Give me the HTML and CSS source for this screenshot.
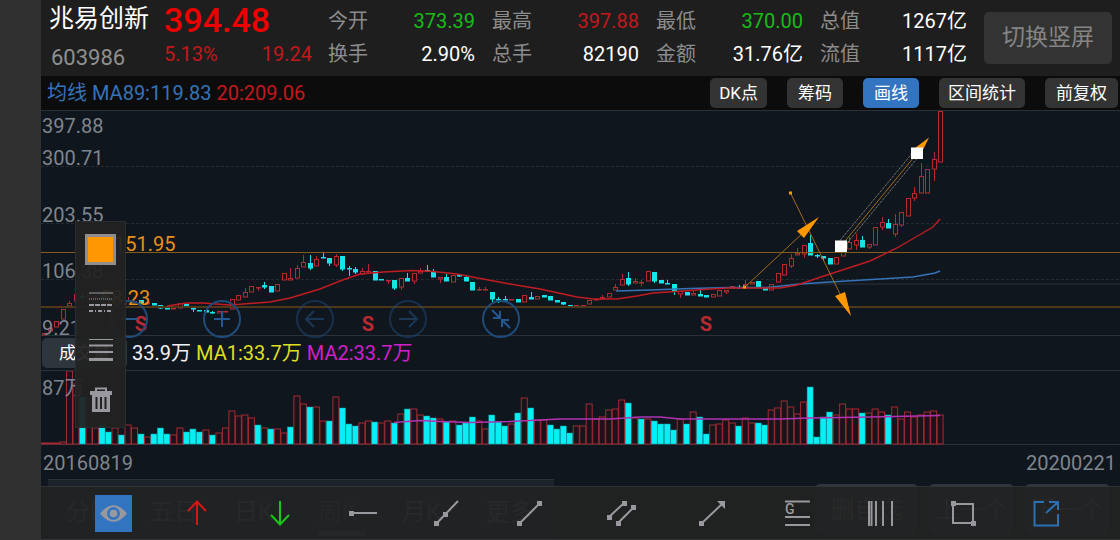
FILE: index.html
```html
<!DOCTYPE html>
<html lang="zh-CN">
<head>
<meta charset="utf-8">
<meta name="viewport" content="width=device-width, initial-scale=1">
<title>兆易创新 603986</title>
<link rel="stylesheet" href="styles.css">
</head>
<body>
<main class="app">
  <header class="quote">
    <div class="stock">
      <h1 class="name">兆易创新</h1>
      <span class="code">603986</span>
    </div>
    <div class="price">
      <strong class="last">394.48</strong>
      <div class="change"><span>5.13%</span><span>19.24</span></div>
    </div>
    <dl class="stats">
      <div><dt>今开</dt><dd class="down">373.39</dd></div>
      <div><dt>最高</dt><dd class="up">397.88</dd></div>
      <div><dt>最低</dt><dd class="down">370.00</dd></div>
      <div><dt>总值</dt><dd>1267亿</dd></div>
      <div><dt>换手</dt><dd>2.90%</dd></div>
      <div><dt>总手</dt><dd>82190</dd></div>
      <div><dt>金额</dt><dd>31.76亿</dd></div>
      <div><dt>流值</dt><dd>1117亿</dd></div>
    </dl>
    <button class="rotate" type="button">切换竖屏</button>
  </header>

  <div class="averages">
    <p class="legend"><span class="blue">均线 MA89:119.83</span> <span class="red">20:209.06</span></p>
    <div class="modes">
      <button type="button">DK点</button>
      <button type="button">筹码</button>
      <button type="button" class="active">画线</button>
      <button type="button">区间统计</button>
      <button type="button" class="last-mode">前复权</button>
    </div>
  </div>

  <section class="charts">
    <div class="pane price-pane">
      <svg id="price" class="plot" viewBox="41 110 1079 226" preserveAspectRatio="none" aria-label="周K线"></svg>
      <ol class="axis">
        <li class="t1">397.88</li><li class="t2">300.71</li><li class="t3">203.55</li><li class="t4">106.38</li><li class="t5">9.21</li>
      </ol>
      <span class="level high">151.95</span>
      <span class="level low">58.23</span>
      <div class="zoomers">
        <button type="button" aria-label="缩小"><svg viewBox="0 0 38 38"><path d="M11 19H27"/></svg></button>
        <button type="button" aria-label="放大"><svg viewBox="0 0 38 38"><path d="M11 19H27M19 11V27"/></svg></button>
        <button type="button" aria-label="左移" class="dim"><svg viewBox="0 0 38 38"><path d="M28 19H11M18 11L10 19L18 27"/></svg></button>
        <button type="button" aria-label="右移" class="dim"><svg viewBox="0 0 38 38"><path d="M10 19H27M20 11L28 19L20 27"/></svg></button>
        <button type="button" aria-label="收起"><svg viewBox="0 0 38 38"><path d="M10 10L18 18M11 18H18V11M28 28L20 20M20 27V20H27"/></svg></button>
      </div>
    </div>

    <div class="volume-head">
      <button type="button" class="indicator">成交量</button>
      <span class="white">33.9万</span>
      <span class="yellow">MA1:33.7万</span>
      <span class="magenta">MA2:33.7万</span>
    </div>

    <div class="pane volume-pane">
      <svg id="volume" class="plot" viewBox="41 371 1079 74" preserveAspectRatio="none" aria-label="成交量"></svg>
      <span class="vmax">87万</span>
    </div>

    <div class="dates"><time>20160819</time><time>20200221</time></div>

    <div class="toolbox">
      <button type="button" class="swatch" aria-label="颜色"></button>
      <button type="button" aria-label="线型"><svg width="26" height="24" viewBox="0 0 26 24"><path d="M1 3H25" /><path d="M1 9H25" stroke-dasharray="1 1"/><path d="M1 15H25" stroke-width="2" stroke-dasharray="5 1"/><path d="M1 21H25" stroke-dasharray="4 2 1 2" stroke-width="2"/></svg></button>
      <button type="button" aria-label="线宽"><svg width="26" height="24" viewBox="0 0 26 24"><path d="M1 1.500H25"/><path d="M1 7.500H25" stroke-width="2"/><path d="M1 14H25" stroke-width="2"/><path d="M1 21.500H25" stroke-width="3"/></svg></button>
      <button type="button" aria-label="删除"><svg width="26" height="26" viewBox="0 0 26 26"><path d="M8 5V1.500H18V5" stroke-width="2"/><path d="M2 4H24V8H2Z" class="solid"/><path d="M4 8H22V25H4Z" class="solid"/><path d="M8.500 10V22M13 10V22M17.500 10V22" class="slots"/></svg></button>
    </div>
  </section>

  <footer class="bottom">
    <nav class="periods" aria-label="周期">
      <a href="#">分时</a><a href="#">五日</a><a href="#">日K</a><a href="#" class="current">周K</a><a href="#">月K</a><a href="#" class="more">更多</a>
    </nav>
    <div class="jump">
      <button type="button" class="wide">删自选</button><button type="button">上一个</button><button type="button">下一个</button>
    </div>
    <div class="draw-tools">
      <button type="button" class="eye" aria-label="显示画线"><svg viewBox="0 0 37 37"><path class="grey" d="M5 18.500Q18.500 2 32 18.500Q18.500 35 5 18.500Z"/><circle cx="18.500" cy="18.500" r="6.500" fill="#3274c0"/><circle cx="18.500" cy="18.500" r="3.800" class="grey"/></svg></button>
      <button type="button" aria-label="上箭头"><svg viewBox="0 0 28 28"><path class="r" d="M14 26V3M5 12L14 2.500L23 12"/></svg></button>
      <button type="button" aria-label="下箭头"><svg viewBox="0 0 28 28"><path class="g" d="M14 2V25M5 16L14 25.500L23 16"/></svg></button>
      <button type="button" aria-label="水平线"><svg viewBox="0 0 28 28"><path d="M2 14H28"/><path class="grey" d="M0 12H5V17H0Z"/></svg></button>
      <button type="button" aria-label="直线"><svg viewBox="0 0 28 28"><path d="M4 24L25 2"/><path class="grey" d="M1 22H6V27H1ZM10 13H15V18H10Z"/></svg></button>
      <button type="button" aria-label="线段"><svg viewBox="0 0 28 28"><path d="M4 24L24 4"/><path class="grey" d="M1 22H6V27H1ZM21 2H26V7H21Z"/></svg></button>
      <button type="button" aria-label="平行线"><svg viewBox="0 0 28 28"><path d="M1 18L16 4M10 24L25 9"/><path class="grey" d="M-1 16H4V21H-1ZM14 2H19V7H14ZM8 22H13V27H8ZM23 6H28V11H23Z"/></svg></button>
      <button type="button" aria-label="箭头线"><svg viewBox="0 0 28 28"><path d="M3 24L23 5"/><path class="grey" d="M0 22H5V27H0ZM18 2H26V10Z"/></svg></button>
      <button type="button" aria-label="黄金分割"><svg viewBox="0 0 28 28"><path d="M2 2.500H27M2 18H27M2 26H27"/><text x="2" y="15">G</text></svg></button>
      <button type="button" aria-label="时间周期"><svg viewBox="0 0 28 28"><path d="M3 2V27M5.500 2V27M10 2V27M17 2V27M26 2V27"/></svg></button>
      <button type="button" aria-label="矩形"><svg viewBox="0 0 28 28"><path d="M4 5H24V24H4Z"/><path class="grey" d="M2 2H7V7H2ZM22 22H27V27H22Z"/></svg></button>
      <button type="button" aria-label="分享"><svg viewBox="0 0 28 28"><path class="b" d="M12 3H2.500V26.500H26V15M14 14L26 3M17 3H26V11"/></svg></button>
    </div>
  </footer>
</main>
<script src="chart.js"></script>
</body>
</html>
```
FILE: styles.css
```css
* { box-sizing: border-box; }
body {
  margin: 0;
  background: #303030;
  font: 20px/24px Roboto, "Noto Sans CJK SC", sans-serif;
  color: #fff;
}
h1, p, dl, dd, ol { margin: 0; padding: 0; list-style: none; font-weight: 400; }
button { font: inherit; color: inherit; border: 0; padding: 0; background: none; white-space: nowrap; }
.app { margin-left: 41px; min-height: 100vh; display: flex; flex-direction: column; background: #10161e; }

.quote { height: 76px; display: flex; background: #1e1e1e; padding: 4px 8px; }
.stock { width: 115px; display: flex; flex-direction: column; gap: 12px; }
.name { font-size: 25px; line-height: 30px; white-space: nowrap; }
.code { font-size: 22px; line-height: 24px; padding-left: 2px; color: #8f8f8f; }
.price { width: 148px; color: #c2181b; }
.last { display: block; font-size: 34px; line-height: 32px; font-weight: 500; color: #ee0000; }
.change { display: flex; justify-content: space-between; padding-top: 6px; }
.stats {
  flex: 1;
  display: grid;
  grid-template-columns: repeat(4, 1fr);
  column-gap: 17px;
  row-gap: 9px;
  margin: 5px 17px 0 16px;
  align-content: start;
}
.stats div { display: flex; justify-content: space-between; white-space: nowrap; }
.stats dt { color: #8c8c8c; }
.up { color: #c2181b; }
.down { color: #18bc18; }
.rotate { width: 128px; height: 52px; margin-top: 8px; border-radius: 5px; background: #333; color: #858585; font-size: 23px; }

.averages { height: 34px; display: flex; justify-content: space-between; background: #0c0c0c; padding: 2px 2px 2px 6px; }
.legend { line-height: 30px; white-space: nowrap; }
.blue { color: #3673b8; }
.red { color: #c2181b; }
.modes { display: flex; gap: 20px; font-size: 17px; }
.modes button { height: 30px; padding: 0 9px; border-radius: 5px; background: #333; min-width: 56px; }
.modes .active { background: #3274c0; }
.modes .last-mode { min-width: 73px; }

.charts { position: relative; flex: 1; display: flex; flex-direction: column; }
.pane { position: relative; }
.plot { display: block; width: 100%; }
.price-pane .plot { height: 226px; }
.volume-pane .plot { height: 74px; }
.axis { color: #7f858c; }
.axis li, .level, .vmax { position: absolute; left: 1px; line-height: 24px; }
.t1 { top: 4px; }
.t2 { top: 36px; }
.t3 { top: 93px; }
.t4 { top: 149px; }
.t5 { top: 206px; }
.level { color: #e8901a; }
.level.high { left: 73px; top: 122px; }
.level.low { left: 59px; top: 176px; }
.vmax { top: 5px; color: #7f858c; }
.zoomers { position: absolute; left: 69px; top: 190px; display: flex; gap: 55px; }
.zoomers button { width: 38px; height: 38px; border: 2px solid #1f4b7a; border-radius: 50%; }
.zoomers svg { display: block; width: 38px; height: 38px; margin: -2px; fill: none; stroke: #24588f; stroke-width: 2; }
.zoomers .dim { opacity: .5; }

.volume-head { display: flex; align-items: center; gap: 5px; height: 35px; border-bottom: 1px solid #2b3138; white-space: nowrap; }
.indicator { width: 85px; height: 30px; margin-left: 1px; border-radius: 5px; background: #2f353d; font-size: 17px; }
.white { color: #f2f2f2; }
.yellow { color: #dede22; }
.magenta { color: #cf1fcf; }
.dates { display: flex; justify-content: space-between; padding: 6px 4px 4px 2px; color: #7f858c; }

.toolbox {
  position: absolute;
  left: 34px;
  top: 111px;
  width: 51px;
  height: 207px;
  padding: 12px 0 14px;
  display: flex;
  flex-direction: column;
  align-items: center;
  justify-content: space-between;
  background: rgba(34, 34, 34, .94);
  border: 1px solid #292d30;
}
.toolbox svg { display: block; fill: none; stroke: #99989e; }
.toolbox .solid { fill: #99989e; stroke: none; }
.toolbox .slots { stroke: #222; stroke-width: 2; }
.swatch { width: 31px; height: 31px; border: 3px solid #8f8d90; background: #ff9800; }

.bottom { position: relative; height: 61px; display: flex; justify-content: space-between; font-size: 24px; color: #8a9099; }
.periods { width: 506px; margin-left: 7px; display: flex; gap: 36px; padding: 17px 0 0 18px; background: #1b222a; border-top: 1px solid #2a3037; }
.periods a { width: 48px; height: 39px; line-height: 30px; color: inherit; text-decoration: none; white-space: nowrap; }
.periods .current { color: #3a70b0; border-bottom: 5px solid #3a70b0; }
.jump { display: flex; gap: 11px; padding: 5px 10px 5px 0; }
.jump button { width: 85px; border-radius: 5px; background: #30363d; }
.jump .wide { width: 103px; }
.draw-tools {
  position: absolute;
  inset: 7px 0 0;
  padding: 0 32px 0 31px;
  display: grid;
  grid-template-columns: repeat(6, 5fr) 6fr repeat(5, 5fr);
  place-items: center;
  background: rgba(34, 35, 35, .95);
  border-top: 1px solid #303436;
  border-bottom: 1px solid #303436;
}
.draw-tools svg { display: block; width: 28px; height: 28px; overflow: visible; fill: none; stroke: #99989e; stroke-width: 2; }
.draw-tools .grey { fill: #99989e; stroke: none; }
.draw-tools circle { stroke: none; }
.draw-tools text { fill: #99989e; stroke: none; font: 500 14px Roboto, sans-serif; }
.draw-tools .r { stroke: #d91616; }
.draw-tools .g { stroke: #18c818; }
.draw-tools .b { stroke: #2a70b5; }
.draw-tools .eye { background: #3274c0; }
.draw-tools .eye svg { width: 37px; height: 37px; }

.grid { stroke: #242b33; stroke-dasharray: 3 2; }
.rule { stroke: #2b3138; }
.candle-up { stroke: #b32b32; fill: #10161e; }
.candle-down { stroke: #18e3e8; fill: #18e3e8; }
.bar-up { stroke: #a22b32; fill: #1b131b; }
.bar-down { fill: #08eef2; stroke: #0a9fa5; stroke-width: .5; }
.line { fill: none; stroke-width: 1.4; }
.ma20 { stroke: #c01c22; }
.ma89 { stroke: #3673b8; }
.vol-ma { stroke: #b033b4; }
.level-line { stroke: #835b1c; }
.level-thick { stroke: #4e3819; stroke-width: 2; }
.trend { stroke: #a06a1c; fill: none; }
.head { fill: #ff9800; }
.dots { stroke: #a79f90; stroke-dasharray: 1 1; }
.handle { fill: #fff; }
.signal { fill: #b82a31; font: 700 20px Roboto, sans-serif; text-anchor: middle; }
```
FILE: chart.js
```js
const START = 43.5;
const STEP = 6.497;
const center = i => START + STEP * i;

// One entry per week: direction, body top, body bottom, optional high and low.
const candles = `u333,335 u328,331 u321,327 u309,319 u303,306,301 u294,301 d296,297,293,299 u295,298 u296,298 d297,299
d298,300 u299,301 d300,302 u300,301,297 u301,302 d300,303 u302,304 d303,305 d305,308,305,309 d307,309
u308,309 u303,308 d304,307 d308,309,308,312 d310,311 d310,312 d312,313,311,314 u311,313 u311,312 u299,309
u295,300 u292,297,288 u286,292 u287,288,287,291 d285,287,282,289 d286,292 u284,291 u273,280 u278,280,268 u268,278,265
u262,267,255 d263,268,255,270 u259,266,256 d257,258,252 d258,263,258,266 u256,265,254,267 d256,269,256,271 d268,269,266,276 d269,272,267,274 u271,274,268
u271,272,264 d271,280 d279,280 u280,281,280,284 d280,288,280,290 u278,287,278,290 d278,281,273 u273,281,273,284 u271,273,268 d270,271,265
d272,277,269 u277,279,277,283 d277,281,274 u275,282 d275,276,274,277 d277,281,275 d282,290 u289,290,287,291 u289,290,287 d292,299,292,302
d299,300,297,303 d299,300,296,301 u299,300 d299,302 u295,302 d297,299,292 u296,299 d295,297 d296,300 d300,302
d302,304,302,305 d305,306,305,307 u305,306 u305,306 u300,304 u299,300 u297,299,295 u293,297 u287,290,284 u279,285,274
d278,284,272,286 u281,283,278 u282,283,280,286 u271,281 d272,281,272,283 d280,283 d283,284,280 d284,291,284,295 u291,294,291,298 d292,295
u293,295,290 d294,296,290 d295,297 u294,297 u290,296 u290,292,290,294 u286,288 d287,288,285 u284,288,280 u282,284
d281,287 d288,290 u284,290 u273,282 u264,275 u258,266,254,268 u253,255,248 u245,254,245,258 d243,255,235 d255,256,254,258
d256,258,256,261 d258,264 u257,264 u248,256 u242,249,237 u240,245,234,250 d240,247,236 u244,247,244,249 u227,245 u222,227,217,230
d223,228,219 u224,234,214,237 u212,225,212,227 u198,216 u193,198,187,201 u176,193,163 u169,193 u159,169,152,181 u111,162`
  .split(/\s+/)
  .map(s => [s[0], ...s.slice(1).split(',').map(Number)]);

const volumes = `u1 u1 u1 u2 u74 u60 d47 u40 u16 d19 d12 u16 d9 u19 u16 d10 u7 d10 d16 d10 u9 u16 d12 d15 d12 u14 d9 u11 u16 u33
u28 u29 u26 d19 u16 d15 u15 u11 d17 u48 u40 d37 u37 u23 d23 u47 d36 d20 d18 u21 u23 d22 u21 u23 d21 u30 d35 u35 u29 d28
d26 u25 d22 u23 d19 d21 d27 u23 u15 d29 d22 d18 u20 d31 u46 d36 u24 u24 d19 d15 d18 d11 u18 u18 u40 u25 u27 u34 u35 u44
d41 u26 d25 u25 d23 d20 d20 d14 u25 d20 u32 d27 d10 u19 u20 u24 u21 d18 u26 u21 d21 d19 u34 u36 u43 u37 u30 u42 d57 d7
d27 d32 u29 u40 u35 u35 d31 u31 u35 u32 d29 u37 u25 u32 u27 u29 u32 u33 u29`
  .split(/\s+/)
  .map(s => [s[0], Number(s.slice(1))]);

const kind = d => (d === 'u' ? 'up' : 'down');
const hline = (y, cls, from = 41) => `<path class="${cls}" d="M${from} ${y}H1120"/>`;

function candle([dir, top, bottom, high = top, low = bottom], i) {
  const x = Math.round(center(i)) + 0.5;
  const height = Math.max(bottom - top, 1);
  return `<g class="candle-${kind(dir)}"><path d="M${x} ${high}V${top}M${x} ${bottom}V${low}"/>` +
    `<rect x="${x - 2}" y="${top + 0.5}" width="4" height="${height - 0.5}"/></g>`;
}

function bar([dir, h], i) {
  const x = center(i) - 3;
  const height = Math.min(h, 73);
  return `<rect class="bar-${kind(dir)}" x="${x.toFixed(1)}" y="${444 - height}" width="6" height="${height}"/>`;
}

document.getElementById('price').innerHTML =
  hline(110.5, 'rule') + hline(166.5, 'grid') + hline(223.5, 'grid') + hline(279.5, 'grid') +
  hline(284, 'rule', 790) + hline(335.5, 'rule') +
  candles.map(candle).join('') +
  hline(252.5, 'level-line') + hline(307, 'level-thick') +
  `<polyline class="line ma89" points="616,291 650,290 690,288.500 730,287.500 767,287.500 800,284 830,282 880,279 913,277 935,273 940,271"/>
  <polyline class="line ma20" points="167,306 187,303 203,303 230,305 270,302 290,298 320,289 340,281 360,274 383,272 413,270.500 433,271.500 457,274 483,279 510,284 540,289 577,297 593,299 617,299 637,296 653,293 683,291 710,289 730,288 780,288 797,285 830,274 870,261 897,248 933,227 940,219"/>
  <path class="trend" d="M745 287L805 231M790.500 193L842 298M841 246L919 151"/>
  <path class="dots" d="M838 243L914 151M843 248L919 156"/>
  <path class="head" d="M819 217L797 231L804 238ZM851 316L835 296L845 292ZM929 137.500L915 148L921 154ZM789 191.500H792V194.500H789ZM743 285.500H746V288.500H743Z"/>
  <path class="handle" d="M835 240.500H847V252H835ZM911 147.500H923V159H911Z"/>
  <text class="signal" x="141" y="331">S</text><text class="signal" x="368" y="331">S</text><text class="signal" x="706" y="331">S</text>`;

document.getElementById('volume').innerHTML =
  hline(444.5, 'rule') + volumes.map(bar).join('') +
  `<polyline class="line vol-ma" points="394,422.500 420,420.500 440,421.500 470,422.500 510,421.500 560,419 610,419 640,417 660,417 680,419 780,419 810,418 870,417 940,415.500"/>`;
```
